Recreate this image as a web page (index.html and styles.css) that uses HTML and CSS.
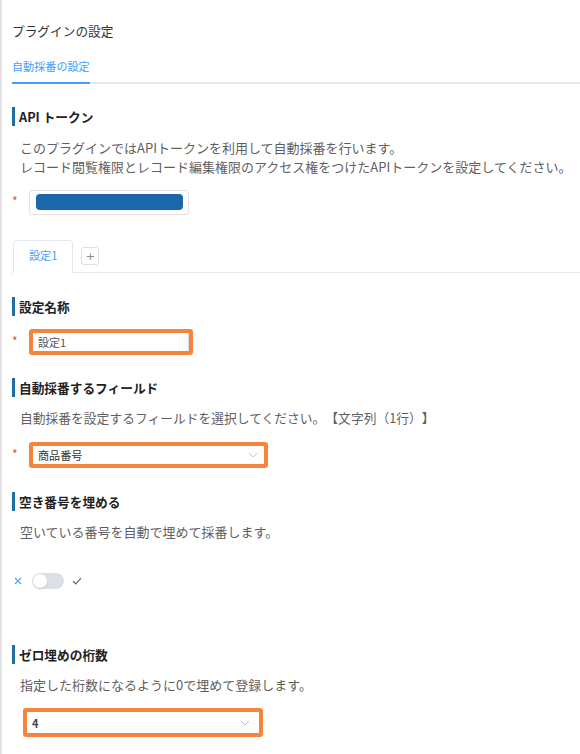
FILE: index.html
```html
<!DOCTYPE html>
<html lang="ja">
<head>
<meta charset="utf-8">
<title>プラグインの設定</title>
<link rel="stylesheet" href="styles.css">
</head>
<body>
<div class="page">
  <h1 class="title">プラグインの設定</h1>
  <div class="nav"><div class="nav-item">自動採番の設定</div></div>

  <h2 class="heading h-api">API トークン</h2>
  <p class="desc desc-api">このプラグインではAPIトークンを利用して自動採番を行います。<br>レコード閲覧権限とレコード編集権限のアクセス権をつけたAPIトークンを設定してください。</p>
  <div class="field-row token-row">
    <span class="req">*</span>
    <div class="token-box"><div class="token-mask"></div></div>
  </div>

  <div class="tabs">
    <div class="tab">設定1</div>
    <button class="tab-add" type="button">+</button>
  </div>

  <h2 class="heading h-name">設定名称</h2>
  <div class="field-row name-row">
    <span class="req">*</span>
    <div class="hl-box name-box"><div class="input-inner">設定1</div></div>
  </div>

  <h2 class="heading h-field">自動採番するフィールド</h2>
  <p class="desc desc-single desc-field">自動採番を設定するフィールドを選択してください。【文字列（1行）】</p>
  <div class="field-row select-row">
    <span class="req">*</span>
    <div class="hl-box select-box">
      <span class="select-text">商品番号</span>
      <svg class="chev" width="10" height="6" viewBox="0 0 10 6"><path d="M1 1L5 5L9 1" fill="none" stroke="#c0c4cc" stroke-width="1"/></svg>
    </div>
  </div>

  <h2 class="heading h-fill">空き番号を埋める</h2>
  <p class="desc desc-single">空いている番号を自動で埋めて採番します。</p>
  <div class="toggle-row">
    <svg class="ico-x" width="8" height="8" viewBox="0 0 8 8"><path d="M1 1L7 7M7 1L1 7" stroke="#5aa5e8" stroke-width="1.2"/></svg>
    <div class="toggle"><div class="knob"></div></div>
    <svg class="ico-check" width="10" height="8" viewBox="0 0 10 8"><path d="M1 4.2L3.8 6.8L9 1.2" fill="none" stroke="#666" stroke-width="1.2"/></svg>
  </div>

  <h2 class="heading h-zero">ゼロ埋めの桁数</h2>
  <p class="desc desc-single">指定した桁数になるように0で埋めて登録します。</p>
  <div class="zero-row">
    <div class="hl-box zero-box">
      <span class="zero-text">4</span>
      <svg class="chev" width="10" height="6" viewBox="0 0 10 6"><path d="M1 1L5 5L9 1" fill="none" stroke="#c0c4cc" stroke-width="1"/></svg>
    </div>
  </div>
</div>
</body>
</html>
```

FILE: styles.css
```css
html, body {
  margin: 0;
  padding: 0;
  background: #fff;
}
body {
  font-family: "Noto Sans CJK JP", "Noto Sans", sans-serif;
  color: #333;
  text-spacing-trim: space-all;
}
.page {
  border-left: 2px solid #e2e2e2;
  padding-left: 10px;
  min-height: 754px;
  box-sizing: border-box;
  overflow: hidden;
}
.title {
  margin: 0;
  padding-top: 21px;
  font-size: 12.7px;
  line-height: 20px;
  font-weight: normal;
  color: #333;
}
.nav {
  margin-top: 15px;
  display: flex;
  border-bottom: 2px solid #e4e7ed;
}
.nav-item {
  font-size: 11.1px;
  line-height: 20px;
  color: #409eff;
  padding-bottom: 6px;
  border-bottom: 2px solid #409eff;
  margin-bottom: -2px;
}
.heading {
  margin: 0;
  border-left: 3px solid #1f6fa0;
  padding-left: 4px;
  font-size: 12.7px;
  line-height: 19px;
  font-weight: bold;
  color: #222;
}
.desc {
  margin: 0;
  padding-left: 8px;
  font-size: 13px;
  line-height: 19px;
  color: #5f5f5f;
  white-space: nowrap;
}
.desc-field {
  font-size: 12.78px;
}
.h-api { margin-top: 23px; }
.desc-api { margin-top: 12px; }
.field-row {
  display: flex;
  align-items: center;
}
.req {
  width: 17px;
  color: #e74c3c;
  font-size: 12px;
  line-height: 12px;
  margin-top: -3px;
}
.token-row { margin-top: 14px; }
.token-box {
  width: 160px;
  height: 25px;
  box-sizing: border-box;
  border: 1px solid #e3e3e3;
  border-radius: 3px;
  padding: 3px 5px 0 6px;
}
.token-mask {
  width: 147px;
  height: 16px;
  background: #1a67a9;
  border-radius: 4px;
}
.tabs {
  margin-top: 25px;
  display: flex;
  align-items: flex-start;
  border-bottom: 1px solid #e4e7ed;
}
.tab {
  margin-left: 1px;
  margin-bottom: -1px;
  height: 33px;
  box-sizing: border-box;
  border: 1px solid #e4e7ed;
  border-bottom: 1px solid #fff;
  border-radius: 4px 4px 0 0;
  background: #fff;
  padding: 0 15px 2px;
  font-size: 11.1px;
  line-height: 29px;
  color: #409eff;
}
.tab-add {
  margin-left: 8px;
  margin-top: 7px;
  width: 18px;
  height: 18px;
  box-sizing: border-box;
  border: 1px solid #dcdfe6;
  border-radius: 3px;
  background: #fff;
  padding: 0;
  font-family: "DejaVu Sans", sans-serif;
  font-size: 11px;
  line-height: 15px;
  color: #888;
}
.h-name { margin-top: 24px; }
.name-row { margin-top: 13px; }
.hl-box {
  border: 4px solid #f5853c;
  border-radius: 3px;
  box-sizing: border-box;
  display: flex;
  align-items: center;
  background: #fff;
}
.name-box {
  width: 164px;
  height: 26px;
}
.input-inner {
  width: 100%;
  height: 100%;
  box-sizing: border-box;
  border-right: 1px solid #dedede;
  padding-left: 5px;
  font-size: 11px;
  line-height: 18px;
  color: #555;
}
.h-field { margin-top: 23px; }
.desc-single { margin-top: 11px; }
.select-row { margin-top: 15px; }
.select-box {
  width: 239px;
  height: 26px;
  padding: 0 6px 0 5px;
  justify-content: space-between;
}
.select-text {
  font-size: 11.1px;
  line-height: 18px;
  color: #333;
}
.chev { display: block; }
.h-fill { margin-top: 24px; }
.toggle-row {
  margin-top: 32px;
  display: flex;
  align-items: center;
  padding-left: 2px;
}
.ico-x { display: block; }
.toggle {
  margin-left: 10px;
  width: 32px;
  height: 16px;
  box-sizing: border-box;
  padding: 1px;
  border-radius: 8px;
  background: #dcdfe6;
  display: flex;
}
.knob {
  width: 14px;
  height: 14px;
  border-radius: 50%;
  background: #fff;
  box-shadow: 0 1px 2px rgba(0,0,0,0.12);
}
.ico-check {
  display: block;
  margin-left: 8px;
}
.h-zero { margin-top: 56px; }
.zero-row {
  margin-top: 14px;
  margin-left: 11px;
}
.zero-box {
  width: 240px;
  height: 29px;
  padding: 0 9px 0 5px;
  justify-content: space-between;
}
.zero-text {
  font-size: 11px;
  line-height: 18px;
  font-weight: bold;
  color: #444;
}
```
